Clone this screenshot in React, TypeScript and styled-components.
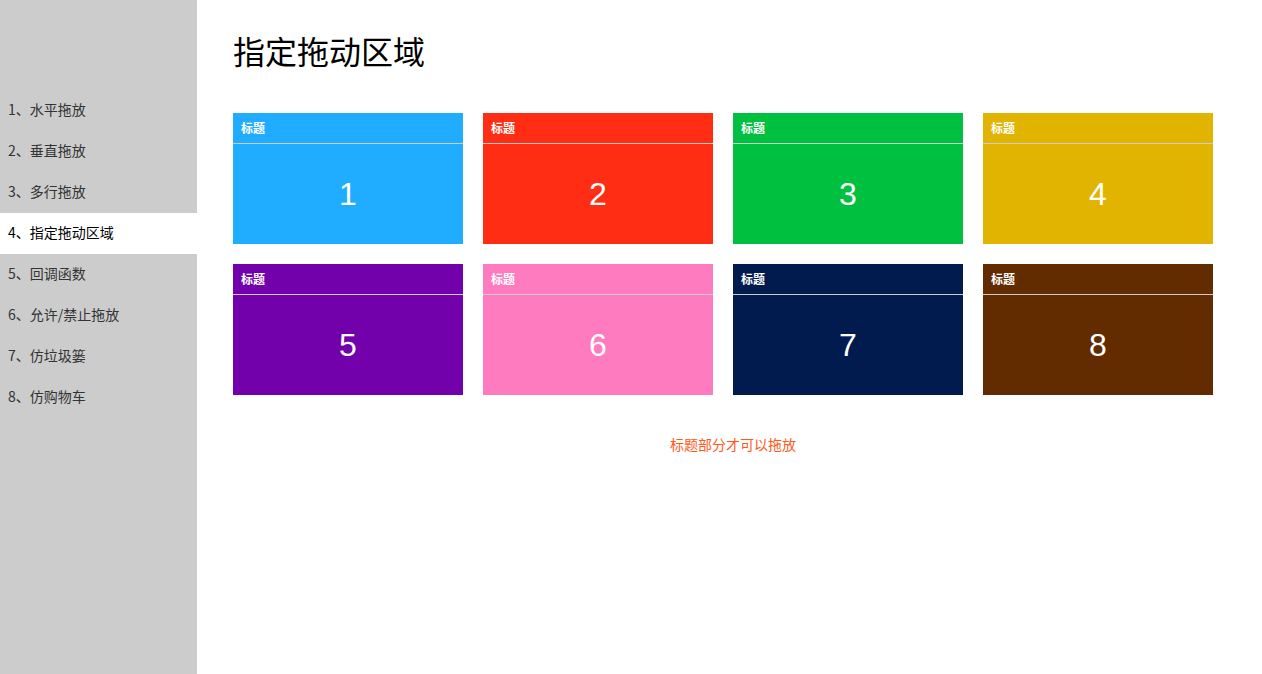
import { ReactElement } from 'react';
import styled, { createGlobalStyle } from 'styled-components';

interface IBox {
    id: number;
    color: string;
}

const boxes: IBox[] = [
    { id: 1, color: '#20adff' },
    { id: 2, color: '#ff2d13' },
    { id: 3, color: '#00c03f' },
    { id: 4, color: '#e0b400' },
    { id: 5, color: '#7200ab' },
    { id: 6, color: '#ff7bbf' },
    { id: 7, color: '#011b4e' },
    { id: 8, color: '#632b00' },
];

const menu = ['水平拖放', '垂直拖放', '多行拖放', '指定拖动区域', '回调函数', '允许/禁止拖放', '仿垃圾篓', '仿购物车'];

const App = (): ReactElement => {
    return (
        <>
            <GlobalStyle />
            <Page>
                <Sidebar>
                    {
                        menu.map((item, i) => (
                            <MenuItem key={item} $active={i === 3}>{i + 1}、{item}</MenuItem>
                        ))
                    }
                </Sidebar>
                <Main>
                    <Title>指定拖动区域</Title>
                    <Grid>
                        {
                            boxes.map(box => (
                                <Card key={box.id} $color={box.color}>
                                    <CardHeader>标题</CardHeader>
                                    <CardBody>{box.id}</CardBody>
                                </Card>
                            ))
                        }
                    </Grid>
                    <Tip>标题部分才可以拖放</Tip>
                </Main>
            </Page>
        </>
    );
};

export default App;

const GlobalStyle = createGlobalStyle`
html, body {
    margin: 0;
    padding: 0;
    height: 100%;
    background: #fff;
}
body {
    font-family: "Noto Sans CJK SC", "Noto Sans", sans-serif;
}
`;

const Page = styled.div`
display: flex;
min-height: 674px;
`;

const Sidebar = styled.nav`
width: 197px;
flex-shrink: 0;
background-color: #cccccc;
padding-top: 90px;
display: flex;
flex-direction: column;
`;

const MenuItem = styled.div<{ $active: boolean }>`
height: 41px;
line-height: 39px;
padding-left: 8px;
font-size: 14px;
color: ${p => (p.$active ? '#000' : '#333')};
background-color: ${p => (p.$active ? '#fff' : 'transparent')};
cursor: pointer;
`;

const Main = styled.main`
flex: 1;
padding: 30px 36px 0 36px;
`;

const Title = styled.h1`
margin: 0 0 43px 0;
font-size: 32px;
line-height: 40px;
font-weight: normal;
color: #000;
`;

const Grid = styled.div`
display: grid;
grid-template-columns: repeat(4, 230px);
gap: 20px;
`;

const Card = styled.div<{ $color: string }>`
height: 131px;
background-color: ${p => p.$color};
color: #fff;
display: flex;
flex-direction: column;
`;

const CardHeader = styled.div`
height: 30px;
line-height: 30px;
padding-left: 8px;
font-size: 12px;
font-weight: bold;
border-bottom: 1px solid #cccccc;
cursor: move;
`;

const CardBody = styled.div`
flex: 1;
display: flex;
align-items: center;
justify-content: center;
font-family: "Liberation Sans", Arial, sans-serif;
font-size: 32px;
`;

const Tip = styled.p`
margin: 39px 0 0 0;
padding-left: 7px;
text-align: center;
font-size: 14px;
line-height: 20px;
color: #ff5a1a;
`;
